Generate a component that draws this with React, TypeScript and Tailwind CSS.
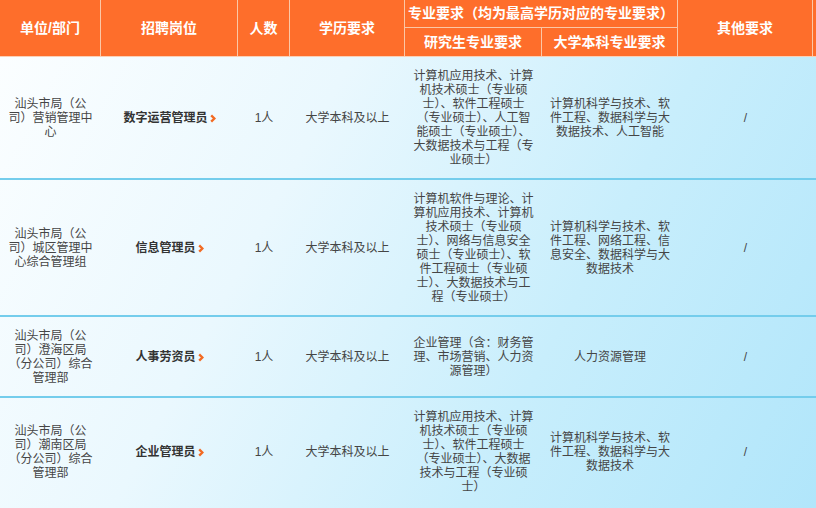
import React from 'react';

type Job = {
  unit: string[];
  title: string;
  count: string;
  edu: string;
  grad: string[];
  bachelor: string[];
  other: string;
};

const jobs: Job[] = [
  {
    unit: ['汕头市局（公', '司）营销管理中', '心'],
    title: '数字运营管理员',
    count: '1人',
    edu: '大学本科及以上',
    grad: [
      '计算机应用技术、计算',
      '机技术硕士（专业硕',
      '士）、软件工程硕士',
      '（专业硕士）、人工智',
      '能硕士（专业硕士）、',
      '大数据技术与工程（专',
      '业硕士）',
    ],
    bachelor: ['计算机科学与技术、软', '件工程、数据科学与大', '数据技术、人工智能'],
    other: '/',
  },
  {
    unit: ['汕头市局（公', '司）城区管理中', '心综合管理组'],
    title: '信息管理员',
    count: '1人',
    edu: '大学本科及以上',
    grad: [
      '计算机软件与理论、计',
      '算机应用技术、计算机',
      '技术硕士（专业硕',
      '士）、网络与信息安全',
      '硕士（专业硕士）、软',
      '件工程硕士（专业硕',
      '士）、大数据技术与工',
      '程（专业硕士）',
    ],
    bachelor: ['计算机科学与技术、软', '件工程、网络工程、信', '息安全、数据科学与大', '数据技术'],
    other: '/',
  },
  {
    unit: ['汕头市局（公', '司）澄海区局', '（分公司）综合', '管理部'],
    title: '人事劳资员',
    count: '1人',
    edu: '大学本科及以上',
    grad: ['企业管理（含：财务管', '理、市场营销、人力资', '源管理）'],
    bachelor: ['人力资源管理'],
    other: '/',
  },
  {
    unit: ['汕头市局（公', '司）潮南区局', '（分公司）综合', '管理部'],
    title: '企业管理员',
    count: '1人',
    edu: '大学本科及以上',
    grad: [
      '计算机应用技术、计算',
      '机技术硕士（专业硕',
      '士）、软件工程硕士',
      '（专业硕士）、大数据',
      '技术与工程（专业硕',
      '士）',
    ],
    bachelor: ['计算机科学与技术、软', '件工程、数据科学与大', '数据技术'],
    other: '/',
  },
];

const Lines = ({ lines }: { lines: string[] }) => (
  <div className="flex flex-col items-center">
    {lines.map((l, i) => (
      <span key={i} className="whitespace-nowrap">
        {l}
      </span>
    ))}
  </div>
);

const Chevron = () => (
  <svg width="6" height="9" viewBox="0 0 6 9" className="ml-[2px] mt-[1px]">
    <polyline points="1.2,1.4 4.4,4.5 1.2,7.6" fill="none" stroke="#f26a22" strokeWidth="2.4" />
  </svg>
);

const App: React.FC = () => {
  return (
    <div className="w-[816px] h-[508px] overflow-hidden bg-white font-['Liberation_Sans','Noto_Sans_CJK_SC',sans-serif]">
      {/* Header */}
      <div className="grid grid-cols-[101px_137px_52px_115px_137px_136px_135px_120px] grid-rows-[28px_28px] w-[933px] bg-[#fe6e2b] text-white text-[14px] font-bold border-b border-[#fbd0b6]">
        <div className="col-start-1 row-start-1 row-span-2 flex items-center justify-center border-r border-[#fbc7a6]">单位/部门</div>
        <div className="col-start-2 row-start-1 row-span-2 flex items-center justify-center border-r border-[#fbc7a6]">招聘岗位</div>
        <div className="col-start-3 row-start-1 row-span-2 flex items-center justify-center border-r border-[#fbc7a6]">人数</div>
        <div className="col-start-4 row-start-1 row-span-2 flex items-center justify-center border-r border-[#fbc7a6]">学历要求</div>
        <div className="col-start-5 col-span-2 row-start-1 flex items-center justify-center whitespace-nowrap border-r border-b border-[#fbc7a6]">
          专业要求（均为最高学历对应的专业要求）
        </div>
        <div className="col-start-5 row-start-2 flex items-center justify-center border-r border-[#fbc7a6]">研究生专业要求</div>
        <div className="col-start-6 row-start-2 flex items-center justify-center border-r border-[#fbc7a6]">大学本科专业要求</div>
        <div className="col-start-7 row-start-1 row-span-2 flex items-center justify-center border-r border-[#fbc7a6]">其他要求</div>
        <div className="col-start-8 row-start-1 row-span-2"></div>
      </div>

      {/* Body */}
      <div className="w-[933px] bg-[linear-gradient(118deg,#fbfeff_0%,#eaf8fe_30%,#c8eefc_60%,#a9e3fa_100%)] text-[12px] leading-[14px] text-[#454545]">
        {jobs.map((job, i) => (
          <div
            key={i}
            className="grid grid-cols-[101px_137px_52px_115px_137px_136px_135px_120px] border-b-2 border-[#74cdec] last:border-b-0 last:pb-[4px]"
          >
            <div className="flex items-center justify-center py-[11.5px] text-center">
              <Lines lines={job.unit} />
            </div>
            <div className="flex items-center justify-center font-bold text-[#333]">
              <span className="whitespace-nowrap">{job.title}</span>
              <Chevron />
            </div>
            <div className="flex items-center justify-center">{job.count}</div>
            <div className="flex items-center justify-center whitespace-nowrap">{job.edu}</div>
            <div className="flex items-center justify-center py-[11.5px] text-center">
              <Lines lines={job.grad} />
            </div>
            <div className="flex items-center justify-center py-[11.5px] text-center">
              <Lines lines={job.bachelor} />
            </div>
            <div className="flex items-center justify-center">{job.other}</div>
            <div></div>
          </div>
        ))}
      </div>
    </div>
  );
};

export default App;
